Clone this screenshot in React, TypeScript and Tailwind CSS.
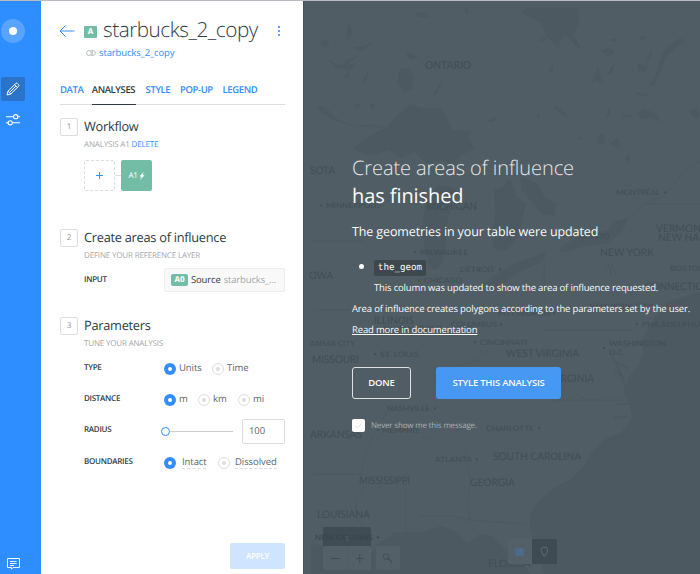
import React from "react";

type Label = { t: string; x: number; y: number; w: number; s: number; dot?: number };

// x / baseline y / width / size in map coordinates
const LABELS: Label[] = [
  { t: "ONTARIO", x: 121, y: 69, w: 46, s: 11 },
  { t: "SOTA", x: 6, y: 174, w: 25, s: 10.5 },
  { t: "MINNEAPOLIS", x: 22, y: 208, w: 55, s: 7.5, dot: 17 },
  { t: "MICHIGAN", x: 123, y: 210, w: 50, s: 10.5 },
  { t: "MONTRÉAL", x: 312, y: 195, w: 44, s: 7.5, dot: 361 },
  { t: "VERMON", x: 352, y: 232, w: 45, s: 10.5 },
  { t: "NEW HAMPS", x: 354, y: 241, w: 62, s: 10.5 },
  { t: "TORONTO", x: 265, y: 239, w: 41, s: 7.5, dot: 260 },
  { t: "NEW YORK", x: 296, y: 256, w: 54, s: 10.5 },
  { t: "MILWAUKEE", x: 116, y: 255, w: 48, s: 7.5, dot: 111 },
  { t: "DETROIT", x: 156, y: 272, w: 35, s: 7.5, dot: 196 },
  { t: "BOSTON", x: 366, y: 271, w: 35, s: 7.5 },
  { t: "OWA", x: 5, y: 279, w: 24, s: 10.5 },
  { t: "CHICAGO", x: 120, y: 283, w: 38, s: 7.5, dot: 115 },
  { t: "CONNECTICUT", x: 341, y: 290, w: 70, s: 10.5 },
  { t: "NEW YORK CITY", x: 285, y: 309, w: 64, s: 7.5 },
  { t: "PITTSBURGH", x: 194, y: 316, w: 52, s: 7.5, dot: 250 },
  { t: "ILLINOIS", x: 70, y: 324, w: 40, s: 10.5 },
  { t: "COLUMBUS", x: 147, y: 327, w: 46, s: 7.5, dot: 197 },
  { t: "INDIANAPOLIS", x: 80, y: 331, w: 58, s: 7.5 },
  { t: "PHILADELPHIA", x: 338, y: 327, w: 60, s: 7.5, dot: 333 },
  { t: "CINCINNATI", x: 176, y: 345, w: 47, s: 7.5, dot: 171 },
  { t: "ANSAS CITY", x: 6, y: 346, w: 45, s: 7.5 },
  { t: "WASHINGTON,", x: 305, y: 346, w: 59, s: 7.5 },
  { t: "D.C.", x: 305, y: 355, w: 16, s: 7.5, dot: 300 },
  { t: "ST. LOUIS", x: 76, y: 357, w: 39, s: 7.5, dot: 71 },
  { t: "MISSOURI", x: 8, y: 363, w: 47, s: 10.5 },
  { t: "WEST VIRGINIA", x: 202, y: 357, w: 73, s: 10.5 },
  { t: "KENTUCKY", x: 131, y: 382, w: 53, s: 10.5 },
  { t: "VIRGINIA", x: 247, y: 382, w: 43, s: 10.5 },
  { t: "NASHVILLE", x: 83, y: 411, w: 43, s: 7.5, dot: 131 },
  { t: "MEMPHIS", x: 78, y: 433, w: 37, s: 7.5, dot: 74 },
  { t: "CHARLOTTE", x: 182, y: 431, w: 48, s: 7.5, dot: 235 },
  { t: "ARKANSAS", x: 6, y: 438, w: 52, s: 10.5 },
  { t: "ATLANTA", x: 131, y: 462, w: 37, s: 7.5, dot: 173 },
  { t: "SOUTH CAROLINA", x: 189, y: 460, w: 88, s: 10.5 },
  { t: "MISSISSIPPI", x: 55, y: 484, w: 51, s: 10.5 },
  { t: "GEORGIA", x: 166, y: 486, w: 45, s: 10.5 },
  { t: "LOUISIANA", x: 13, y: 518, w: 53, s: 10.5 },
  { t: "NEW ORLEANS", x: 11, y: 540, w: 58, s: 7.5, dot: 74 },
  { t: "FLORIDA", x: 184, y: 567, w: 43, s: 10.5 },
];

const LAKES = [
  "M49 149C60 138 72 132 84 127C88 118 98 112 106 104L118 108L136 108L144 120L148 130L166 131L165 140L171 148L156 156L150 166L138 160L124 164L110 152L98 158L84 150L66 156Z",
  "M218 13L223 8L274 8L275 24L270 35L276 46L274 47L266 40L262 34L256 42L255 48L248 42L242 36L238 24Z",
  "M134 186C122 196 118 212 119 232C120 248 122 264 130 270C140 268 142 250 142 232C144 216 146 204 154 192C144 186 140 184 134 186Z",
  "M190 190L200 186L206 178L212 196L222 204L218 220L214 236C206 250 198 254 190 248C186 232 194 214 190 200Z",
  "M216 176L234 184L240 196L252 204L250 216L238 214L228 202L218 190Z",
  "M254 252C262 238 284 236 304 230L310 222L324 218L318 232L302 244L280 246L264 252Z",
  "M176 284C190 278 206 262 226 258L242 252L238 262L214 272L196 286L182 288Z",
  "M94 74L96 69L106 68L110 78L108 90L100 92L94 84Z",
  "M370 42L376 38L381 41L372 48L362 56L358 70L354 76L350 86L345 85L352 74L356 60L362 48Z",
];

const PONDS = [
  "M112 14l6-2 6 5-8 0z", "M159 9l5 1 0 5z", "M17 42l6-2 2 4-5 4z", "M44 24l-1 16 4-4 1-8z",
  "M50 48l8 3 10-8-8 3z", "M24 60l10 8 12 2 4-6-10 2 14-10-10 4-8 6z", "M58 84l6-12-2 8z",
  "M40 78l4-6 1 6z", "M102 52l12 5-8 3z", "M129 95l9-14-5 12z", "M14 106l8 2 14 14-8 -3-12-8z",
  "M50 105l6-1-2 5z", "M66 104l5 1-1 4-4-2z", "M184 121l9-5-4 6z", "M236 41l8-6-4 6z",
  "M270 41l8 8-6-3z", "M246 70l3-7-1 10z", "M250 105l8 5 7 8-10-5z", "M234 113l1 6-2-2z",
  "M297 50l10-2 4 5-8 3z", "M305 40l8-2-2 4z", "M335 37l6-1-2 5z", "M288 84l6-16 4 14-6-2z",
  "M303 74l8-10-4 9z", "M334 64l10 2-4 6-6-2z", "M342 60l6-9-2 8z", "M332 92l13 3-8 1z",
  "M302 118l4-11-1 8z", "M318 114l10 2-8 1z", "M334 112l6-3 12 5 4 7-10-3-10 1z", "M385 110l7-1 4 6-5 3z",
  "M294 136l5-2 2 8-6 2z", "M306 144l8-6 2 10-4-2z", "M320 158l6-4-1 8z", "M273 138l5-1-2 3z",
];

function BaseMap() {
  return (
    <svg className="absolute inset-0" width="396" height="573" viewBox="0 1 396 573" fontFamily="Lato, 'Open Sans', sans-serif">
      <rect x="0" y="0" width="396" height="574" fill="#505d64" />
      <g fill="#4c5960">
        <path d="M396 292L376 298L362 302L352 316L344 330L336 342L340 352L334 366L324 378L320 394L326 404L328 418L318 432L300 440L288 452L280 466L266 480L250 488L236 500L226 514L226 530L234 552L240 574L226 574L218 562L202 550L188 536L176 534L164 543L152 532L138 526L118 532L92 532L76 542L68 552L50 546L36 548L7 544L7 574L396 574Z" />
        {LAKES.map((d) => <path key={d} d={d} />)}
      </g>
      <g fill="#4c5960" stroke="#4c5960" strokeWidth="0.5">
        {PONDS.map((d) => <path key={d} d={d} />)}
      </g>
      <g fill="none" stroke="#4a575f" strokeWidth="0.8" opacity="0.6">
        <path d="M34 120L50 127L66 125L82 128" />
        <path d="M324 218L340 204L360 196L370 184L382 170L396 162" />
        <path d="M340 204H396M7 241H60M10 310H70M10 474H60M116 516H150L164 520L222 524" />
        <path d="M102 480V532M62 450L58 470L60 488L52 500V516L60 530" />
        <path d="M161 450L166 480L164 506L166 520" />
        <path d="M88 404L72 430L62 450M240 260V300M240 330H330M250 400H320" />
        <path d="M118 437L134 444M272 394L284 400L294 400M138 381L152 366L168 362L184 350" />
        <path d="M308 356L316 372L322 390M312 362L324 368M310 370L320 378M312 404L326 404M310 418L324 416" strokeWidth="2" />
        <path d="M304 264l4 10M308 264l-2 12M300 274l4-8M312 274l-4-8" />
      </g>
      <rect x="19" y="527" width="48" height="20" rx="2" fill="#3f4c54" />
      <g fill="#424e56">
        {LABELS.map((l) => (
          <g key={l.t} fill={l.t === "NEW ORLEANS" ? "#38444b" : undefined}>
            <text x={l.x} y={l.y} fontSize={l.s} textLength={l.w} lengthAdjust="spacingAndGlyphs">{l.t}</text>
            {l.dot !== undefined && <circle cx={l.dot} cy={l.t === "D.C." ? l.y - 7 : l.y - 2.7} r="1.1" />}
          </g>
        ))}
      </g>
      <text x="41" y="541" fontSize="7" fill="#58656c">5</text>
      <rect x="19" y="546" width="48" height="24" rx="2" fill="#536067" />
      <path d="M43.500 546V570" stroke="#505d64" />
      <rect x="72" y="546" width="24" height="24" rx="2" fill="#536067" />
      <g stroke="#414e56" fill="none" strokeWidth="1">
        <path d="M27 558.500H36M51.500 558.500H60M55.800 554V563" />
        <circle cx="82" cy="556.500" r="2.800" />
        <path d="M84 558.500L88 562.500" strokeWidth="1.600" />
      </g>
      <path d="M204 541a2 2 0 0 1 2-2H228V564H206a2 2 0 0 1-2-2Z" fill="#536067" />
      <path d="M228 539H251a2 2 0 0 1 2 2V562a2 2 0 0 1-2 2H228Z" fill="#3e4b53" />
      <path d="M211.500 548l2.700 0.800 2.600-0.800 2.700 0.800V556l-2.700-0.800-2.600 0.800-2.700-0.800Z" fill="#496c92" />
      <path d="M214.200 548.500V556M216.800 548V555.500" stroke="#536b7d" strokeWidth="0.700" />
      <path d="M240.300 556.500C238 553 237 551.500 237 550.300a3.300 3.300 0 0 1 6.600 0C243.600 551.500 242.600 553 240.300 556.500Z" fill="none" stroke="#626f76" strokeWidth="0.900" />
    </svg>
  );
}

function StepHead({ n, title }: { n: number; title: string }) {
  return (
    <div className="flex h-[18px] items-center">
      <span className="flex size-[18px] shrink-0 items-center justify-center rounded-[2px] border border-[#dddddd] text-[8px] text-[#8d9397]">{n}</span>
      <h2 className="mb-[2px] ml-[6px] text-[12.800px] leading-[18px] tracking-[-0.270px] text-[#2e3c43]">{title}</h2>
    </div>
  );
}

function Sub({ children }: { children: React.ReactNode }) {
  return <p className="ml-6 h-4 text-[8px] leading-[18px] tracking-[-0.170px] whitespace-nowrap text-[#a3a7aa]">{children}</p>;
}

function Field({ label, children }: { label: string; children: React.ReactNode }) {
  return (
    <div className="ml-6 flex h-6 items-center">
      <span className="w-20 shrink-0 text-[8px] font-semibold tracking-[-0.280px] text-[#2e3c43]">{label}</span>
      {children}
    </div>
  );
}

function Radio({ on }: { on?: boolean }) {
  return on ? (
    <span className="mt-px flex size-3 shrink-0 items-center justify-center rounded-full bg-[#338dff]"><span className="size-1 rounded-full bg-white" /></span>
  ) : (
    <span className="mt-px flex size-3 shrink-0 items-center justify-center rounded-full border border-[#dddddd]"><span className="size-1 rounded-full bg-[#dddddd]" /></span>
  );
}

export default function App() {
  return (
    <div className="flex h-[574px] w-[700px] overflow-hidden border-t border-[#b9bbc3] bg-white font-['Open_Sans',sans-serif] text-[#2e3c43] [text-rendering:geometricPrecision]">
      <nav className="flex w-[41px] shrink-0 flex-col bg-[#2e8dff]">
        <span className="mt-[18px] ml-px flex size-6 items-center justify-center rounded-full bg-[#58a4ff]"><span className="size-2 rounded-full bg-white" /></span>
        <span className="mt-[34px] ml-px flex size-6 items-center justify-center rounded-[2px] bg-[#2b72c9]">
          <svg width="14" height="14" viewBox="0 0 14 14" fill="none" stroke="white" strokeWidth="1"><path d="M1 13L2 9.200L9.800 1.400a1 1 0 0 1 1.400 0L12.600 2.800a1 1 0 0 1 0 1.400L4.800 12ZM2 9.200L4.800 12M8.600 2.600L11.400 5.400M3.600 10.400L9.800 4.200" /></svg>
        </span>
        <svg className="mt-[13px] ml-[6px]" width="14" height="12" viewBox="0 0 14 12" fill="none" stroke="white" strokeWidth="1.100"><path d="M0 2.700H7.500M11.900 2.700H14M0 8.800H2M6.400 8.800H14" /><circle cx="9.700" cy="2.700" r="2.100" /><circle cx="4.200" cy="8.800" r="2.100" /></svg>
        <svg className="mt-auto mb-1 ml-[7px]" width="13" height="13" viewBox="0 0 13 13" fill="none" stroke="white"><path d="M0.500 1.500H12.500V10.500H6L4.500 12.300V10.500H0.500Z" /><path d="M3 4.500H9.500M3 6.500H9.500M3 8.500H7" strokeWidth="0.900" /></svg>
      </nav>

      <aside className="flex w-[262px] shrink-0 flex-col pr-[18px] pl-[19px]">
        <header className="mt-[11px] flex h-[34px] items-center">
          <svg className="mt-[4px] -ml-px" width="16" height="12" viewBox="0 0 16 12" fill="none" stroke="#338dff"><path d="M6.500 0.500L1 6L6.500 11.500M1 6H15.500" /></svg>
          <span className="mt-[6px] ml-[9px] flex h-3 w-[13px] items-center justify-center rounded-[1px] bg-[#73bda7] text-[8px] leading-3 font-bold text-white">A</span>
          <h1 className="mt-px ml-[6px] text-[20.700px] leading-[34px] font-light tracking-[-0.460px] whitespace-nowrap">starbucks_2_copy</h1>
          <svg className="mt-[3px] ml-auto mr-1" width="4" height="12" viewBox="0 0 4 12" fill="#338dff"><circle cx="2" cy="2" r="1.100" /><circle cx="2" cy="6" r="1.100" /><circle cx="2" cy="10" r="1.100" /></svg>
        </header>
        <div className="ml-[26px] flex h-[14px] items-center">
          <svg width="10" height="6" viewBox="0 0 10 6" fill="none" stroke="#b3b6b8" strokeWidth="0.900"><circle cx="3" cy="3" r="2.400" /><path d="M5.200 0.600H7a2.400 2.400 0 0 1 0 4.800H5.200Q6.500 4.500 6.500 3T5.200 0.600" /></svg>
          <span className="ml-[3px] text-[9.500px] tracking-[-0.130px] text-[#338dff]">starbucks_2_copy</span>
        </div>
        <div className="mt-[18px] flex h-[27px] gap-[9.800px] border-b border-[#dddddd] text-[9.500px] leading-[23px] font-semibold tracking-[-0.400px] text-[#338dff]">
          <span className="w-[22px]">DATA</span>
          <span className="-mb-px w-11 border-b border-[#2e3c43] text-[#2e3c43]">ANALYSES</span>
          <span>STYLE</span>
          <span>POP-UP</span>
          <span>LEGEND</span>
        </div>

        <section className="mt-[13px] h-[111px]">
          <StepHead n={1} title="Workflow" />
          <Sub>ANALYSIS A1 <span className="text-[#338dff]">DELETE</span></Sub>
          <div className="mt-2 ml-6 flex items-center">
            <span className="flex size-[31px] items-center justify-center rounded-[2px] border border-dashed border-[#dddddd]">
              <svg width="7" height="7" viewBox="0 0 7 7" fill="#338dff"><path d="M3 0h1v3h3v1h-3v3h-1v-3h-3v-1h3z" /></svg>
            </span>
            <span className="h-px w-[6px] bg-[#dddddd]" />
            <span className="flex size-[31px] items-center justify-center gap-px rounded-[2px] bg-[#73bda7] text-[8px] tracking-[-0.200px] text-white">
              A1<svg width="6" height="8" viewBox="0 0 6 8" fill="white"><path d="M4.600 0L0.500 4.500H2.500L1 8L5.600 3.300H3.600Z" /></svg>
            </span>
          </div>
        </section>

        <section className="h-[88px]">
          <StepHead n={2} title="Create areas of influence" />
          <Sub>DEFINE YOUR REFERENCE LAYER</Sub>
          <div className="mt-[5px]">
            <Field label="INPUT">
              <span className="flex h-6 w-[121px] items-center rounded-[2px] border border-[#eeeeee] bg-[#f9f9f9] text-[9.500px] tracking-[-0.150px] whitespace-nowrap">
                <span className="ml-[6px] flex h-3 w-[17px] items-center justify-center rounded-[2px] bg-[#73bda7] text-[8px] font-bold text-white">A0</span>
                <span className="ml-[3px]">Source</span>
                <span className="ml-[3px] text-[#a3a7aa]">starbucks_...</span>
              </span>
            </Field>
          </div>
        </section>

        <section>
          <StepHead n={3} title="Parameters" />
          <Sub>TUNE YOUR ANALYSIS</Sub>
          <div className="mt-[5px] flex flex-col text-[9.500px] tracking-[-0.080px] text-[#5a6469]">
            <Field label="TYPE">
              <Radio on /><span className="ml-[3px] w-[33px]">Units</span><Radio /><span className="ml-[3px]">Time</span>
            </Field>
            <div className="mt-[7px]"><Field label="DISTANCE">
              <Radio on /><span className="ml-[3px] w-[19px]">m</span><Radio /><span className="ml-[3px] w-[25px]">km</span><Radio /><span className="ml-[3px]">mi</span>
            </Field></div>
            <div className="mt-[7px]"><Field label="RADIUS">
              <span className="mt-[3px] flex items-center"><span className="size-[9px] -ml-[3px] rounded-full border border-[#338dff] bg-white" /><span className="h-px w-[63px] bg-[#cccccc]" /></span>
              <span className="mt-[3px] ml-[9px] flex h-[25px] w-[43px] items-center rounded-[2px] border border-[#dddddd] pl-[6px]">100</span>
            </Field></div>
            <div className="mt-2"><Field label="BOUNDARIES">
              <Radio on /><span className="ml-[6px] w-6 border-b border-dashed border-[#dddddd] leading-[13px]">Intact</span>
              <span className="ml-[12px]"><Radio /></span><span className="ml-[5px] border-b border-dashed border-[#dddddd] leading-[13px]">Dissolved</span>
            </Field></div>
          </div>
        </section>
        <button className="mt-auto mb-[5px] ml-auto h-[26px] w-[55px] rounded-[2px] bg-[#cfe4ff] text-[8px] font-semibold tracking-[-0.200px] text-white">APPLY</button>
      </aside>

      <main className="relative w-[397px] overflow-hidden border-l border-[#47545c]">
        <BaseMap />
        <div className="relative flex flex-col pt-[153px] pl-[48px] whitespace-nowrap text-[#fafbfb]">
          <h2 className="text-[20px] leading-[28px] tracking-[-0.080px]"><span className="block font-light text-[#e5e8ea]">Create areas of influence</span>has finished</h2>
          <p className="mt-[12px] text-[12.500px] leading-[20px] tracking-[-0.120px]">The geometries in your table were updated</p>
          <div className="mt-[18px] ml-[7px] flex h-4 items-center">
            <span className="mb-[3px] size-[5px] rounded-full bg-white" />
            <code className="ml-[10px] flex h-4 w-[52px] items-center justify-center rounded-[2px] bg-[#3e474c] font-['DejaVu_Sans_Mono',monospace] text-[9.200px]">the_geom</code>
          </div>
          <p className="mt-1 ml-[22px] text-[9.500px] leading-4 tracking-[-0.160px]">This column was updated to show the area of influence requested.</p>
          <p className="mt-[5px] text-[9.500px] leading-4 tracking-[-0.160px]">Area of influence creates polygons according to the parameters set by the user.</p>
          <a className="mt-[5px] self-start text-[9.500px] leading-4 tracking-[-0.160px] underline underline-offset-1">Read more in documentation</a>
          <div className="mt-[29px] flex gap-[25px] text-[9.500px] font-semibold tracking-[-0.220px]">
            <button className="h-8 w-[59px] rounded-[3px] border border-[#dfe2e4]">DONE</button>
            <button className="h-8 w-[125px] rounded-[3px] bg-[#459dff]/92">STYLE THIS ANALYSIS</button>
          </div>
          <label className="mt-5 flex h-[13px] items-center text-[8px] tracking-[-0.180px] text-[#a9b0b4]">
            <span className="mr-[6px] flex size-[13px] items-center justify-center rounded-[2px] bg-white"><svg width="7" height="5" viewBox="0 0 7 5" fill="none" stroke="#dddddd"><path d="M0.500 2.500L2.500 4.500L6.500 0.500" /></svg></span>
            Never show me this message.
          </label>
        </div>
      </main>
    </div>
  );
}
